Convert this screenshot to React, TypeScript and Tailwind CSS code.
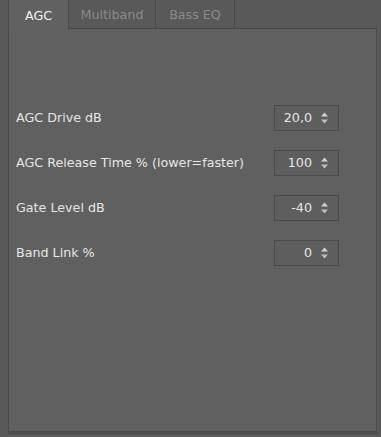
import React from 'react';

const rows = [
    { label: 'AGC Drive dB', value: '20,0' },
    { label: 'AGC Release Time % (lower=faster)', value: '100' },
    { label: 'Gate Level dB', value: '-40' },
    { label: 'Band Link %', value: '0' },
];

function SpinBox({ value }: { value: string }) {
    return (
        <div className="w-[65px] h-[26px] border border-[#4a4a4a] bg-[#5e5e5e] flex items-center justify-end pr-[9px]">
            <span className="text-[#e6e6e6] mr-[8px]">{value}</span>
            <svg width="9" height="14" viewBox="0 0 9 14" className="block">
                <path d="M1 5.5 L4.5 1.5 L8 5.5 Z" fill="#d0d0d0" />
                <path d="M1 8.5 L4.5 12.5 L8 8.5 Z" fill="#bcbcbc" />
            </svg>
        </div>
    );
}

export default function App() {
    return (
        <div
            className="w-[381px] h-[437px] bg-[#595959] pl-[8px] pr-[4px] pb-[5px] flex flex-col text-[12.7px]"
            style={{ fontFamily: '"DejaVu Sans", sans-serif' }}
        >
            {/* Tabs */}
            <div className="flex h-[29px] shrink-0">
                <div className="w-[61px] bg-[#616161] border-l border-r border-[#4a4a4a] flex items-center justify-center pt-[2px] text-[#f2f2f2]">
                    AGC
                </div>
                <div className="w-[87px] bg-[#595959] border-r border-b border-[#4a4a4a] flex items-center justify-center pt-[2px] text-[#8a8a8a]">
                    Multiband
                </div>
                <div className="w-[79px] bg-[#595959] border-r border-b border-[#4a4a4a] flex items-center justify-center pt-[2px] text-[#8a8a8a]">
                    Bass EQ
                </div>
                <div className="flex-1 border-b border-[#4a4a4a]" />
            </div>

            {/* Panel */}
            <div className="flex-1 bg-[#606060] border-l border-r border-b border-[#4a4a4a] shadow-[0_2px_0_#4e4e4e] pt-[76px] pl-[7px] pr-[37px] flex flex-col gap-[19px]">
                {rows.map((r) => (
                    <div key={r.label} className="flex items-center justify-between">
                        <span className="text-[#e6e6e6]">{r.label}</span>
                        <SpinBox value={r.value} />
                    </div>
                ))}
            </div>
        </div>
    );
}
